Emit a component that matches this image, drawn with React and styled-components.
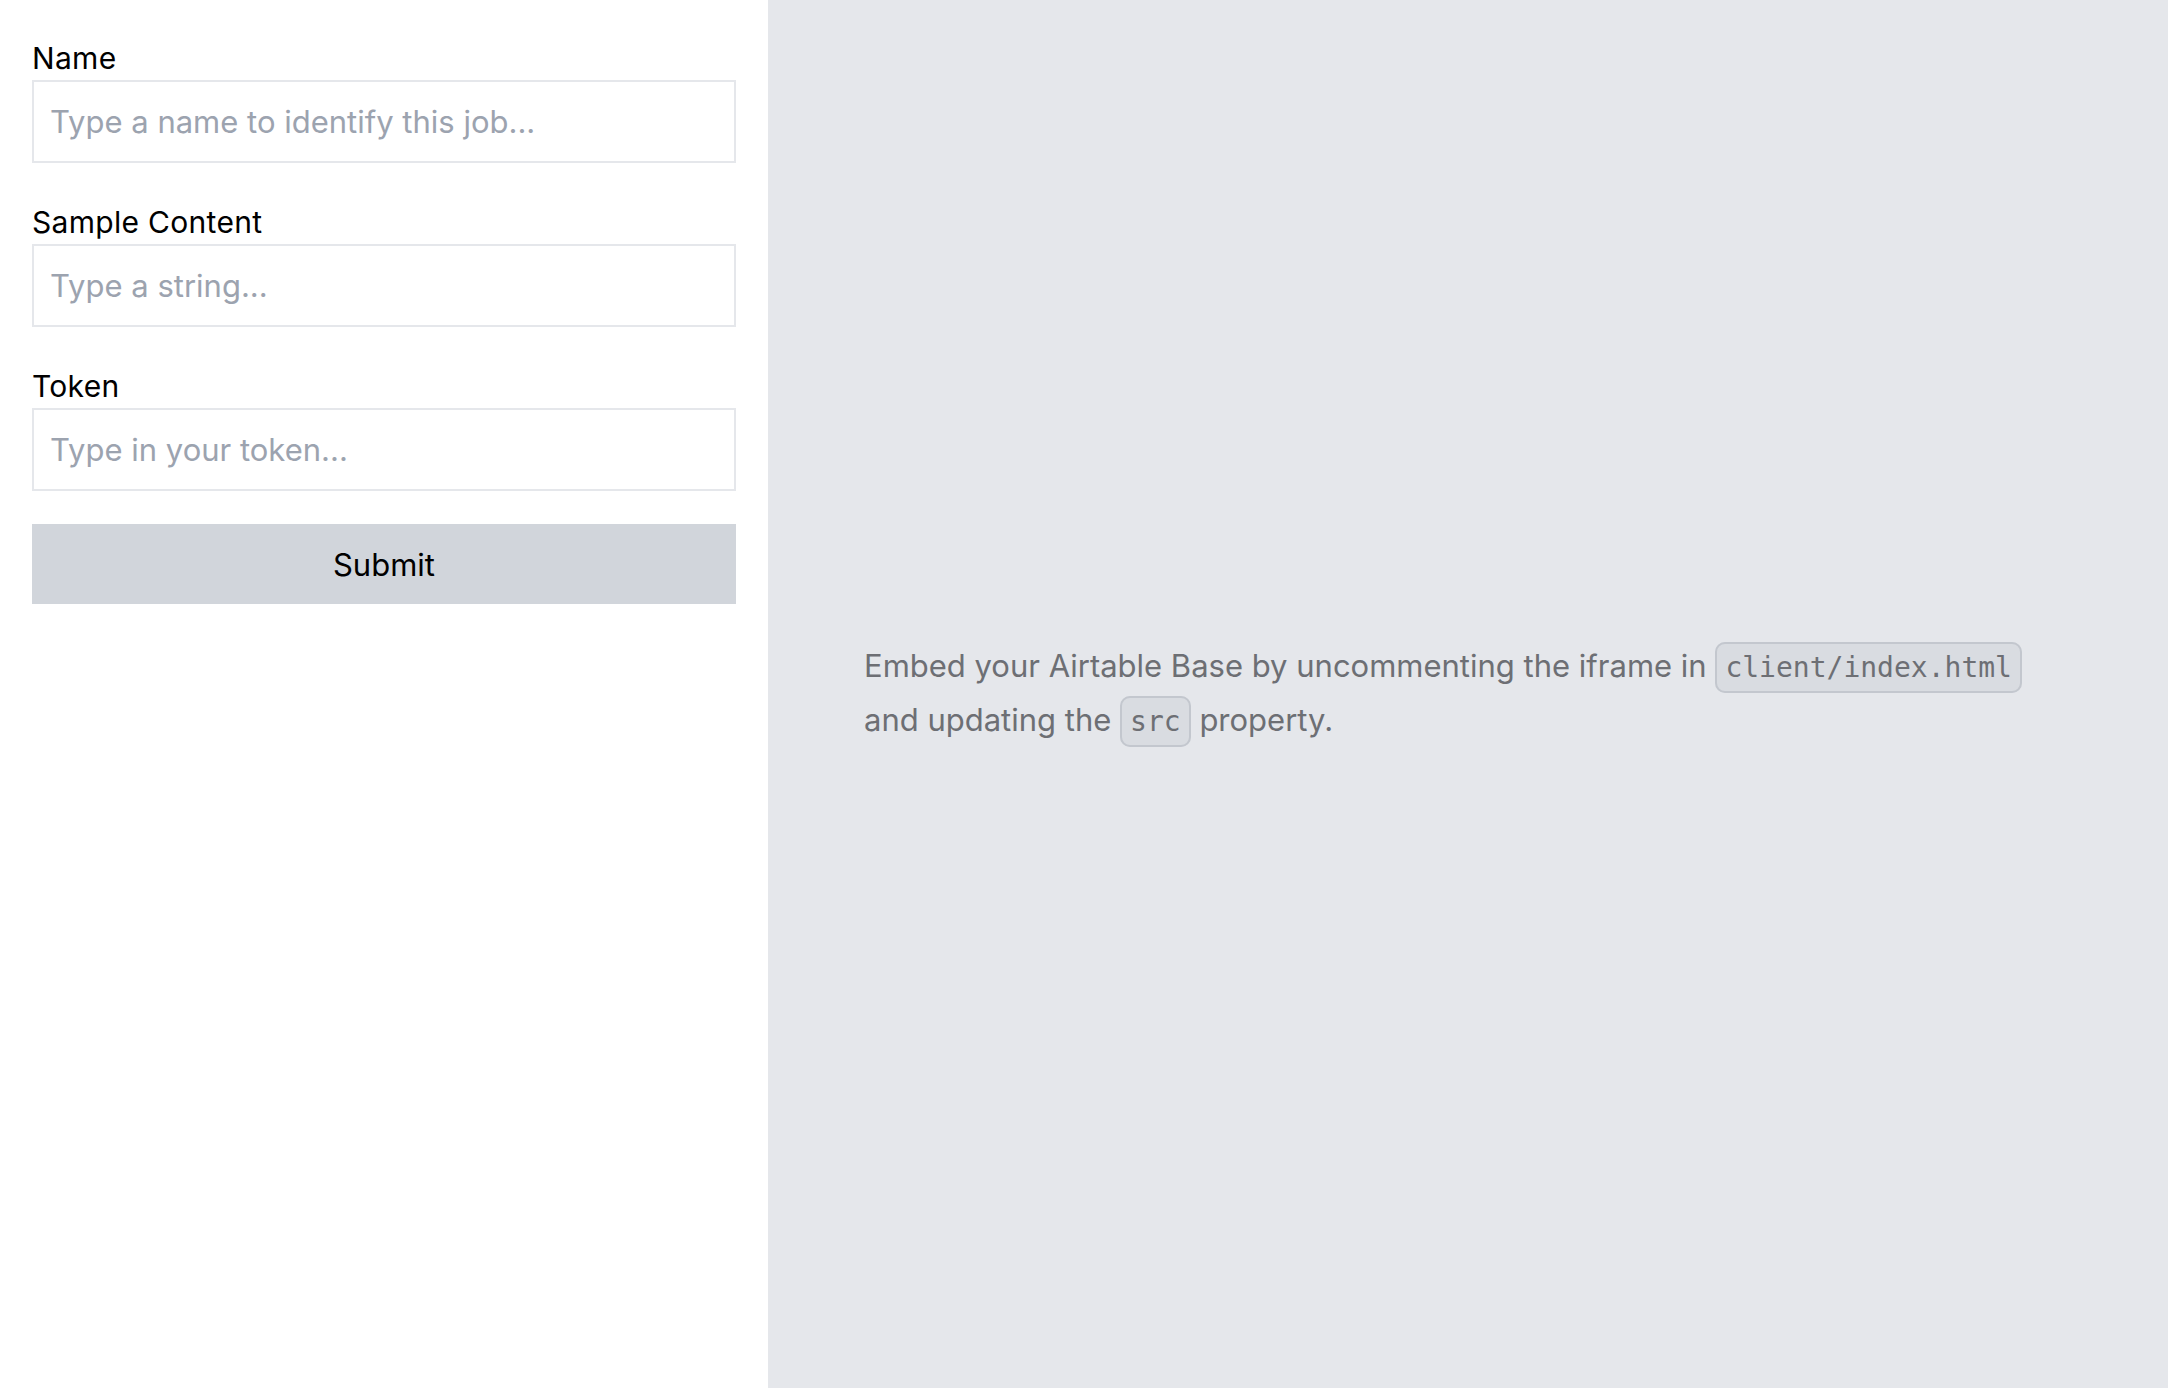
import styled, { createGlobalStyle } from 'styled-components';

const GlobalStyle = createGlobalStyle`
  html, body {
    margin: 0;
    padding: 0;
  }
  body {
    font-family: Inter, "Noto Sans", sans-serif;
    color: #000;
    -webkit-font-smoothing: antialiased;
  }
  * {
    box-sizing: border-box;
  }
`;

const Layout = styled.div`
  display: flex;
  width: 100%;
  height: 100vh;
`;

const Sidebar = styled.form`
  display: flex;
  flex-direction: column;
  width: 768px;
  flex-shrink: 0;
  background: #fff;
  padding: 38px 32px 32px;
`;

const Field = styled.div`
  display: flex;
  flex-direction: column;
  gap: 2px;
  margin-bottom: 39px;

  &:last-of-type {
    margin-bottom: 33px;
  }
`;

const Label = styled.label`
  font-size: 30px;
  line-height: 40px;
  letter-spacing: 0.3px;
  color: #000;
`;

const Input = styled.input`
  width: 100%;
  height: 83px;
  padding: 0 16px;
  border: 2px solid #e5e7eb;
  border-radius: 0;
  background: #fff;
  font-family: inherit;
  font-size: 31px;
  color: #111827;
  outline: none;

  &::placeholder {
    color: #9ca3af;
  }
`;

const SubmitButton = styled.button`
  width: 100%;
  height: 80px;
  border: none;
  background: #d1d5db;
  font-family: inherit;
  font-size: 31px;
  color: #000;
  cursor: pointer;
`;

const Preview = styled.main`
  flex: 1;
  display: flex;
  align-items: center;
  padding: 0 96px;
  background: #e5e7eb;
`;

const Note = styled.p`
  margin: 0;
  font-size: 31px;
  line-height: 52px;
  color: #6d6f74;
`;

const Code = styled.code`
  font-family: "DejaVu Sans Mono", "Liberation Mono", monospace;
  font-size: 28px;
  padding: 7px 8px;
  border: 2px solid #c3c7ce;
  border-radius: 10px;
  background: #d9dce1;
  color: #6d6f74;
`;

const fields = [
  { id: 'name', label: 'Name', placeholder: 'Type a name to identify this job...' },
  { id: 'content', label: 'Sample Content', placeholder: 'Type a string...' },
  { id: 'token', label: 'Token', placeholder: 'Type in your token...' },
];

export default function App() {
  return (
    <>
      <GlobalStyle />
      <Layout>
        <Sidebar onSubmit={(e) => e.preventDefault()}>
          {fields.map((f) => (
            <Field key={f.id}>
              <Label htmlFor={f.id}>{f.label}</Label>
              <Input id={f.id} type="text" placeholder={f.placeholder} />
            </Field>
          ))}
          <SubmitButton type="submit">Submit</SubmitButton>
        </Sidebar>
        <Preview>
          <Note>
            Embed your Airtable Base by uncommenting the iframe in <Code>client/index.html</Code> and
            updating the <Code>src</Code> property.
          </Note>
        </Preview>
      </Layout>
    </>
  );
}
